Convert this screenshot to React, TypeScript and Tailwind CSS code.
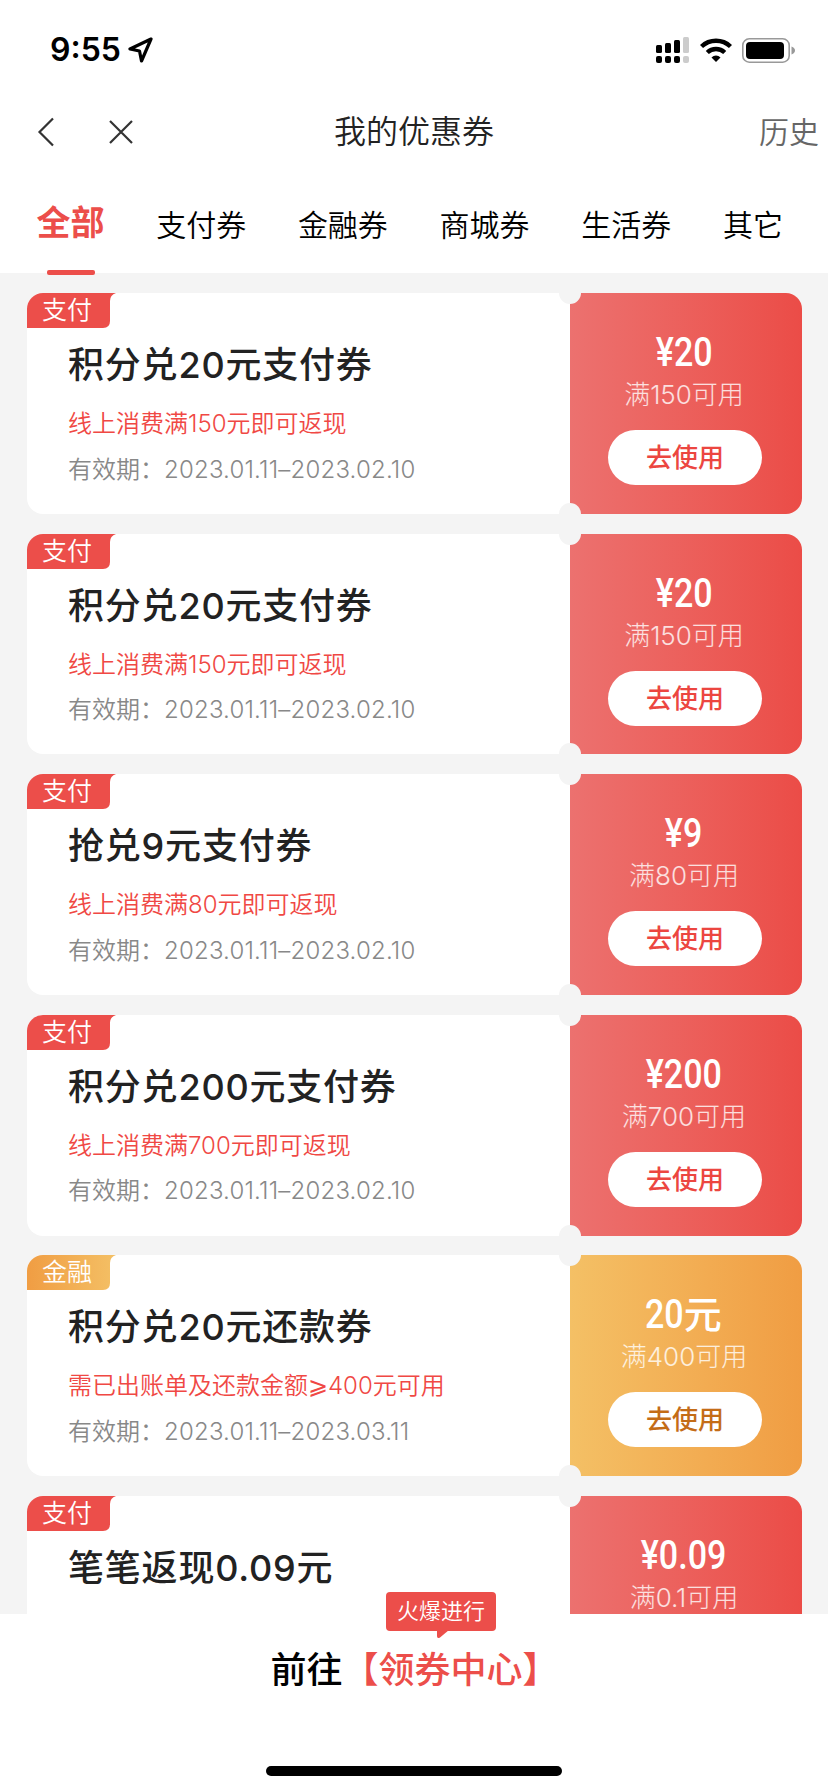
interface Coupon {
  tag: string;
  theme: "red" | "gold";
  title: string;
  condition?: string;
  validity?: string;
  amount: string;
  unit?: string;
  limit: string;
}

const tabs = ["支付券", "金融券", "商城券", "生活券", "其它"];

const coupons: Coupon[] = [
  {
    tag: "支付",
    theme: "red",
    title: "积分兑20元支付券",
    condition: "线上消费满150元即可返现",
    validity: "2023.01.11–2023.02.10",
    amount: "¥20",
    limit: "满150可用",
  },
  {
    tag: "支付",
    theme: "red",
    title: "积分兑20元支付券",
    condition: "线上消费满150元即可返现",
    validity: "2023.01.11–2023.02.10",
    amount: "¥20",
    limit: "满150可用",
  },
  {
    tag: "支付",
    theme: "red",
    title: "抢兑9元支付券",
    condition: "线上消费满80元即可返现",
    validity: "2023.01.11–2023.02.10",
    amount: "¥9",
    limit: "满80可用",
  },
  {
    tag: "支付",
    theme: "red",
    title: "积分兑200元支付券",
    condition: "线上消费满700元即可返现",
    validity: "2023.01.11–2023.02.10",
    amount: "¥200",
    limit: "满700可用",
  },
  {
    tag: "金融",
    theme: "gold",
    title: "积分兑20元还款券",
    condition: "需已出账单及还款金额⩾400元可用",
    validity: "2023.01.11–2023.03.11",
    amount: "20",
    unit: "元",
    limit: "满400可用",
  },
  {
    tag: "支付",
    theme: "red",
    title: "笔笔返现0.09元",
    amount: "¥0.09",
    limit: "满0.1可用",
  },
];

export default function App() {
  return (
    <div className="flex h-[1792px] w-[828px] flex-col overflow-hidden bg-white font-['Inter','Noto_Sans_CJK_SC',sans-serif]">
      <StatusBar />

      {/* Header */}
      <header className="flex h-16 items-center">
        <div className="flex flex-1 items-center">
          <svg className="ml-[37px] h-[30px] w-[18px]" viewBox="0 0 18 30" fill="none" stroke="#333" strokeWidth="2.200">
            <path d="M16 1.5 2.5 15 16 28.5" />
          </svg>
          <svg className="ml-[54px] h-6 w-6" viewBox="0 0 24 24" fill="none" stroke="#333" strokeWidth="2.200">
            <path d="M1 1l22 22M23 1 1 23" />
          </svg>
        </div>
        <h1 className="text-[32px] font-[350] text-[#222]">我的优惠券</h1>
        <div className="flex flex-1 justify-end pt-px text-[30px] font-[350] text-[#666]">
          <span className="mr-[9px]">历史</span>
        </div>
      </header>

      {/* Tabs */}
      <nav className="relative z-10 flex h-[109px] shrink-0 items-start gap-[51.7px] bg-white pl-[36.5px] text-[30px] leading-[44px] font-[350] whitespace-nowrap text-black">
        <div className="flex flex-col items-center text-[34px] font-bold text-[#ec4e4a]">
          <span className="mt-[36.5px]">全部</span>
          <span className="mt-[25.5px] h-[5px] w-12 shrink-0 rounded-[2px] bg-[#ec4e4a]" />
        </div>
        {tabs.map((tab) => (
          <span key={tab} className="mt-[38.5px]">{tab}</span>
        ))}
      </nav>

      {/* Coupon list */}
      <main className="flex h-[1341px] shrink-0 flex-col gap-[19.8px] overflow-hidden bg-[#f4f4f4] pt-5 pr-[26px] pl-[27px]">
        {coupons.map((coupon, index) => (
          <CouponCard key={index} coupon={coupon} />
        ))}
      </main>

      {/* Footer */}
      <footer className="relative flex flex-1 flex-col items-center bg-white">
        <div className="mt-[31px] ml-px text-[36px] leading-[50px] font-medium text-black">
          前往<span className="text-[#ec4e4a]">【领券中心】</span>
        </div>
        <div className="absolute top-[-22px] left-[386px] flex h-[39px] w-[110px] items-center justify-center rounded-[4px] bg-[#ec4e4a] text-[22px] font-[350] text-white">
          火爆进行
          <svg className="absolute top-[38px] left-[50px] h-[9px] w-[13px]" viewBox="0 0 13 9" fill="#ec4e4a">
            <path d="M1 0h12L4 7.5Q1 9 1 6z" />
          </svg>
        </div>
        <div className="mt-[71px] h-[10px] w-[296px] rounded-full bg-black" />
      </footer>
    </div>
  );
}

// Phone status bar
function StatusBar() {
  return (
    <div className="flex h-[100px] shrink-0 items-center justify-between pr-[33px] pl-[50px]">
      <div className="flex items-center gap-[7px]">
        <span className="text-[32px] leading-none font-semibold text-black">9:55</span>
        <svg className="h-[26px] w-[25px]" viewBox="0 0 25 26" fill="none" stroke="#000" strokeWidth="3.200" strokeLinejoin="round">
          <path d="M23 2 2 12l9.500 2L13.500 24z" />
        </svg>
      </div>
      <div className="flex items-center gap-[10px]">
        <svg className="h-[26px] w-[34px]" viewBox="0 0 34 26">
          <rect x="0" y="8" width="6" height="8" rx="1.500" />
          <rect x="9" y="6" width="6" height="10" rx="1.500" />
          <rect x="18" y="3" width="6" height="13" rx="1.500" />
          <rect x="27" y="0" width="6" height="16" rx="1.500" fill="#ccc" />
          <rect x="0" y="19" width="6" height="7" rx="2" />
          <rect x="9" y="19" width="6" height="7" rx="2" />
          <rect x="18" y="19" width="6" height="7" rx="2" />
          <rect x="27" y="19" width="6" height="7" rx="2" fill="#ccc" />
        </svg>
        <svg className="h-6 w-8" viewBox="0 0 32 24" fill="none" stroke="#000" strokeWidth="4.400">
          <path d="M1.500 8.500a21 21 0 0 1 29 0" />
          <path d="M7.300 14.500a12.500 12.500 0 0 1 17.400 0" />
          <path d="M16 24l-4.500-4.600a6.500 6.500 0 0 1 9 0z" fill="#000" stroke="none" />
        </svg>
        <svg className="h-[25px] w-[53px]" viewBox="0 0 53 25">
          <rect x="0.800" y="0.800" width="46.400" height="23.400" rx="6.500" fill="none" stroke="#999" strokeWidth="1.600" />
          <rect x="4" y="4" width="38" height="17" rx="4" />
          <path d="M49.500 8.500q3.500 1.500 3.500 4t-3.500 4z" fill="#999" />
        </svg>
      </div>
    </div>
  );
}

// Coupon card component
function CouponCard({ coupon }: { coupon: Coupon }) {
  const gold = coupon.theme === "gold";

  return (
    <div className="relative flex h-[220.8px] shrink-0 overflow-hidden rounded-[16px] bg-white">
      <div className="flex-1">
        <div className="relative h-[35px] w-[89px] pl-[15px] text-[25px] leading-[35px] font-[350] text-white">
          <svg className="absolute top-0 left-0 h-full w-full" viewBox="0 0 89 35">
            <defs>
              <linearGradient id="gold-tag">
                <stop offset="0" stopColor="#f09d43" />
                <stop offset="1" stopColor="#f4c065" />
              </linearGradient>
            </defs>
            <path d="M0 0h89q-6 2-6 8v20q0 7-7 7H0z" fill={gold ? "url(#gold-tag)" : "#ec4e4a"} />
          </svg>
          <span className="relative">{coupon.tag}</span>
        </div>
        <div className="pl-[41px]">
          <h2 className="mt-[12px] text-[36px] leading-[50px] font-medium tracking-[0.800px] text-[#222]">
            {coupon.title}
          </h2>
          {coupon.condition && (
            <p className="mt-[18px] text-[24px] leading-8 font-[350] text-[#f04844]">{coupon.condition}</p>
          )}
          {coupon.validity && (
            <p className="mt-[13.5px] text-[24px] leading-8 font-[350] text-[#888]">
              有效期：<span className="tracking-[0.200px]">{coupon.validity}</span>
            </p>
          )}
        </div>
      </div>

      <div
        className={
          gold
            ? "flex w-[232px] flex-col items-center bg-linear-to-r from-[#f4c065] to-[#f09d43] pr-1"
            : "flex w-[232px] flex-col items-center bg-linear-to-r from-[#ec716f] to-[#eb4c47] pr-1"
        }
      >
        <div className="mt-[34px] flex h-[50px] items-center justify-center text-[41px] leading-[50px] text-white">
          <span className={coupon.unit ? "-ml-[9px] origin-right scale-x-[0.83] font-['Roboto'] font-medium" : "scale-x-[0.83] font-['Roboto'] font-medium"}>
            {coupon.amount}
          </span>
          {coupon.unit && <span className="text-[38px] font-medium">{coupon.unit}</span>}
        </div>
        <div className="mt-[2px] text-[26px] leading-8 font-light text-white/80">{coupon.limit}</div>
        <button
          className={
            gold
              ? "mt-[19px] ml-[2px] h-[55px] w-[154px] rounded-full bg-white text-[26px] font-medium text-[#c46c17]"
              : "mt-[19px] ml-[2px] h-[55px] w-[154px] rounded-full bg-white text-[26px] font-medium text-[#ec4640]"
          }
        >
          去使用
        </button>
      </div>

      {/* Ticket notches */}
      <span className="absolute top-[-11px] left-[532px] h-[22px] w-[22px] rounded-full bg-[#f4f4f4]" />
      <span className="absolute bottom-[-11px] left-[532px] h-[22px] w-[22px] rounded-full bg-[#f4f4f4]" />
    </div>
  );
}
